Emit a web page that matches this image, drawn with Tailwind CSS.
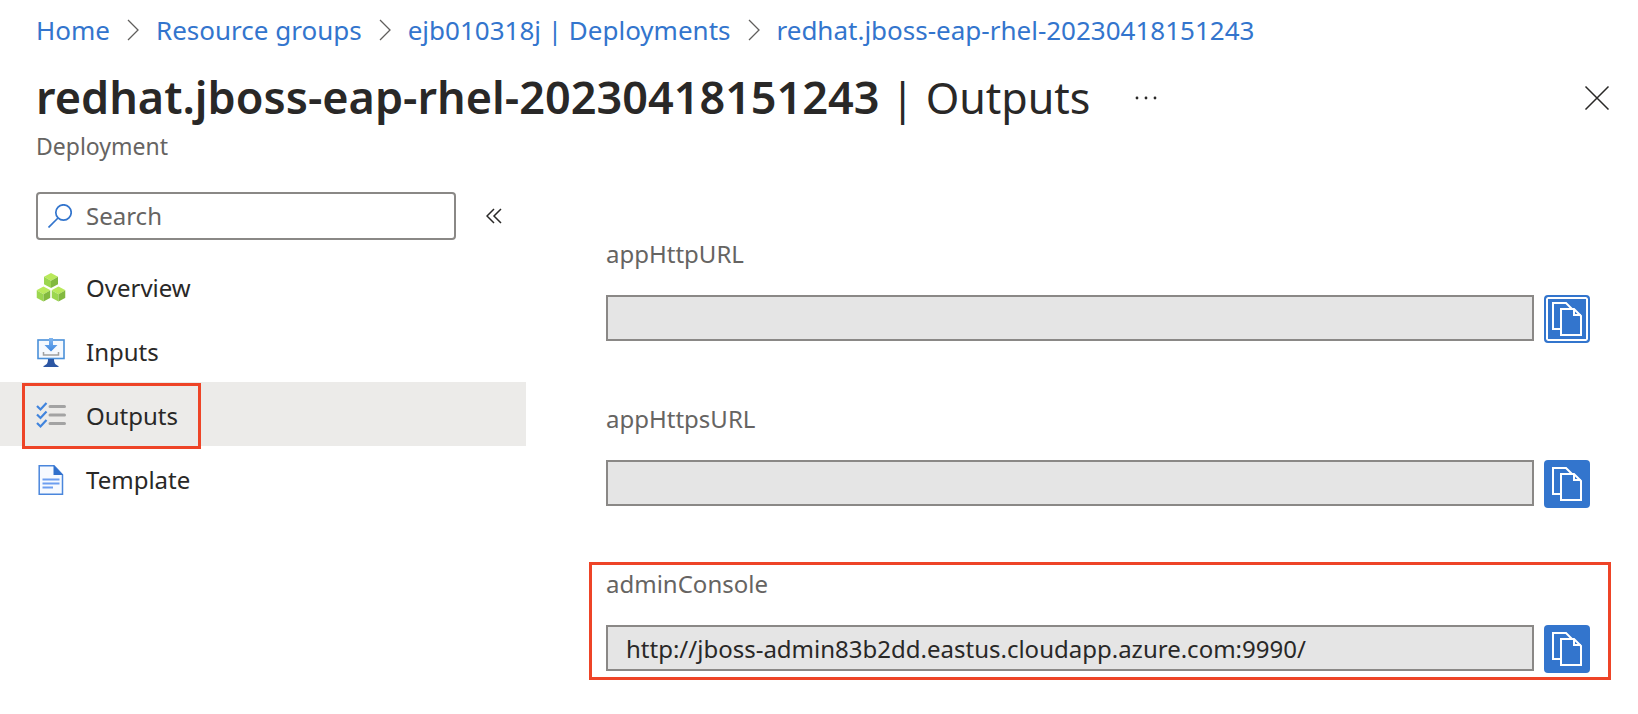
<!DOCTYPE html>
<html lang="en">
<head>
<meta charset="utf-8">
<meta name="viewport" content="width=device-width, initial-scale=1">
<title>redhat.jboss-eap-rhel-20230418151243 | Outputs</title>
<script src="https://cdn.jsdelivr.net/npm/@tailwindcss/browser@4"></script>
</head>
<body class="min-h-screen bg-white font-['Noto_Sans','Open_Sans',sans-serif] text-[#292827]">
<svg class="hidden" aria-hidden="true">
  <symbol id="chevron" viewBox="0 0 12 22"><path d="M1 1l10 10L1 21" fill="none" stroke="#605e5c" stroke-width="1.3"/></symbol>
  <symbol id="copy" viewBox="0 0 30 34">
    <path d="M9 27H1V1h13l6 6" fill="none" stroke="#fff" stroke-width="2"/>
    <path d="M9 7h13l7 7v19H9z" fill="#3375cd" stroke="#fff" stroke-width="2"/>
    <path d="M22 7v6h7" fill="none" stroke="#fff" stroke-width="2"/>
  </symbol>
  <symbol id="cube" viewBox="0 0 14 15">
    <path d="M7 0l7 3.700-7 4L0 3.700z" fill="#b9e95b"/>
    <path d="M0 3.700l7 4V15l-7-3.800z" fill="#9bd64f"/>
    <path d="M14 3.700l-7 4V15l7-3.800z" fill="#82b93f"/>
  </symbol>
</svg>

<header class="pl-9 pr-7">
  <nav aria-label="Breadcrumb" class="flex h-[60px] items-center gap-[17px] text-[26px] text-[#3375cd]">
    <a href="#">Home</a>
    <svg class="h-[22px] w-3" aria-hidden="true"><use href="#chevron"/></svg>
    <a href="#">Resource groups</a>
    <svg class="h-[22px] w-3" aria-hidden="true"><use href="#chevron"/></svg>
    <a href="#">ejb010318j | Deployments</a>
    <svg class="h-[22px] w-3" aria-hidden="true"><use href="#chevron"/></svg>
    <a href="#">redhat.jboss-eap-rhel-20230418151243</a>
  </nav>
  <div class="flex h-[70px] items-center pt-1">
    <h1 class="whitespace-nowrap text-[43px]"><span class="text-[45px] font-semibold">redhat.jboss-eap-rhel-20230418151243</span> | Outputs</h1>
    <button type="button" aria-label="More" class="ml-10 p-1">
      <svg class="h-6 w-6" viewBox="0 0 24 24" fill="#292827"><circle cx="3" cy="13" r="1.400"/><circle cx="12" cy="13" r="1.400"/><circle cx="21" cy="13" r="1.400"/></svg>
    </button>
    <button type="button" aria-label="Close" class="ml-auto">
      <svg class="h-[26px] w-[26px]" viewBox="0 0 26 26" fill="none" stroke="#292827" stroke-width="1.500"><path d="M1.500 2.500l23 23M24.500 2.500l-23 23"/></svg>
    </button>
  </div>
  <p class="text-[23px] leading-8 text-[#666462]">Deployment</p>
</header>

<div class="flex pt-[30px]">
  <aside class="w-[526px] shrink-0">
    <div class="flex h-12 items-center pl-9 pr-6">
      <label class="flex h-12 w-[420px] items-center gap-[14px] rounded-sm border-2 border-[#8a8886] pl-[10px]">
        <svg class="h-6 w-6 shrink-0" viewBox="0 0 24 24" fill="none" stroke="#3375cd" stroke-width="1.700" aria-hidden="true"><circle cx="15.500" cy="8.500" r="7.700"/><path d="M10 14L.5 23.500"/></svg>
        <input type="search" aria-label="Search" placeholder="Search" class="min-w-0 flex-1 text-[24px] outline-none placeholder:text-[#666462]">
      </label>
      <button type="button" aria-label="Collapse menu" class="ml-auto">
        <svg class="h-4 w-4" viewBox="0 0 16 16" fill="none" stroke="#292827" stroke-width="1.500"><path d="M8 1L1 8l7 7M15 1L8 8l7 7"/></svg>
      </button>
    </div>
    <nav aria-label="Deployment" class="mt-[14px] text-[24px]">
      <a href="#" class="flex h-16 items-center gap-5 pl-9 pt-1">
        <svg class="h-[30px] w-[30px]" viewBox="0 0 30 30" aria-hidden="true"><use href="#cube" x="8" y="0" width="14" height="15"/><use href="#cube" x="0.500" y="13" width="14" height="16"/><use href="#cube" x="15.500" y="13" width="14" height="16"/></svg>
        Overview
      </a>
      <a href="#" class="flex h-16 items-center gap-5 pl-9 pt-1">
        <svg class="h-[30px] w-[30px]" viewBox="0 0 30 30" aria-hidden="true">
          <defs><linearGradient id="arrow" x1="0" y1="0" x2="0" y2="1"><stop offset="0" stop-color="#7fb5ef"/><stop offset="1" stop-color="#3d87e0"/></linearGradient></defs>
          <rect x="2" y="3" width="26" height="18.500" fill="#f5f9fe" stroke="#4a90d9" stroke-width="1.600"/>
          <path d="M12 22h6c0 4 1 5.500 4.500 7v1h-15v-1c3.500-1.500 4.500-3 4.500-7z" fill="#2c56a3"/>
          <path d="M7.500 15v3h15v-3" fill="none" stroke="#a0a0a0" stroke-width="1.500"/>
          <path d="M13 1h4v7h4.500L15 14.500 8.500 8H13z" fill="url(#arrow)"/>
        </svg>
        Inputs
      </a>
      <a href="#" aria-current="page" class="relative flex h-16 items-center gap-5 bg-[#ecebe9] pl-9 pt-1">
        <svg class="h-[30px] w-[30px]" viewBox="0 0 30 30" aria-hidden="true">
          <path d="M14 5.500h14.500M14 14h14.500M14 22.500h14.500" stroke="#a3a3a3" stroke-width="3" stroke-linecap="round"/>
          <path d="M1 5l3.500 3.500L10.500 2M1 13.500L4.500 17l6-6.500M1 22l3.500 3.500L10.500 19" fill="none" stroke="#4084dd" stroke-width="2.200"/>
        </svg>
        Outputs
        <span class="absolute left-[22px] top-px -bottom-[3px] w-[179px] border-[3px] border-[#ee4427]"></span>
      </a>
      <a href="#" class="flex h-16 items-center gap-5 pl-9 pt-1">
        <svg class="h-[30px] w-[30px]" viewBox="0 0 30 30" aria-hidden="true">
          <path d="M3.200 .8h14.800l8.500 9V29.200H3.200z" fill="#f7faff" stroke="#4a86dc" stroke-width="1.500"/>
          <path d="M17.500 0L27 10h-9.500z" fill="#3070cc"/>
          <path d="M6.500 14.500h17M6.500 18.500h17M6.500 22.500h10.500" stroke="#6d9ef0" stroke-width="2"/>
        </svg>
        Template
      </a>
    </nav>
  </aside>

  <main class="flex min-w-0 flex-1 flex-col gap-[53px] pl-20 pr-12 pt-[39px] pb-10 text-[24px]">
    <div>
      <label for="http" class="block leading-[46px] text-[#666462]">appHttpURL</label>
      <div class="mt-[18px] flex items-start gap-[10px]">
        <input id="http" readonly value="" class="h-[46px] min-w-0 flex-1 border-2 border-[#8a8886] bg-[#e5e5e5] px-[18px]">
        <button type="button" aria-label="Copy appHttpURL" class="flex h-12 w-[46px] items-center justify-center rounded-sm border-2 border-[#3375cd] bg-[#3375cd] inset-ring-2 inset-ring-white"><svg class="h-[34px] w-[30px]" aria-hidden="true"><use href="#copy"/></svg></button>
      </div>
    </div>
    <div>
      <label for="https" class="block leading-[46px] text-[#666462]">appHttpsURL</label>
      <div class="mt-[18px] flex items-start gap-[10px]">
        <input id="https" readonly value="" class="h-[46px] min-w-0 flex-1 border-2 border-[#8a8886] bg-[#e5e5e5] px-[18px]">
        <button type="button" aria-label="Copy appHttpsURL" class="flex h-12 w-[46px] items-center justify-center rounded-sm bg-[#3375cd]"><svg class="h-[34px] w-[30px]" aria-hidden="true"><use href="#copy"/></svg></button>
      </div>
    </div>
    <div class="relative">
      <label for="admin" class="block leading-[46px] text-[#666462]">adminConsole</label>
      <div class="mt-[18px] flex items-start gap-[10px]">
        <input id="admin" readonly value="http://jboss-admin83b2dd.eastus.cloudapp.azure.com:9990/" class="h-[46px] min-w-0 flex-1 border-2 border-[#8a8886] bg-[#e5e5e5] px-[18px]">
        <button type="button" aria-label="Copy adminConsole" class="flex h-12 w-[46px] items-center justify-center rounded-sm bg-[#3375cd]"><svg class="h-[34px] w-[30px]" aria-hidden="true"><use href="#copy"/></svg></button>
      </div>
      <span class="pointer-events-none absolute -left-[17px] -right-[21px] top-px -bottom-[7px] border-[3px] border-[#ee4427]"></span>
    </div>
  </main>
</div>
</body>
</html>
